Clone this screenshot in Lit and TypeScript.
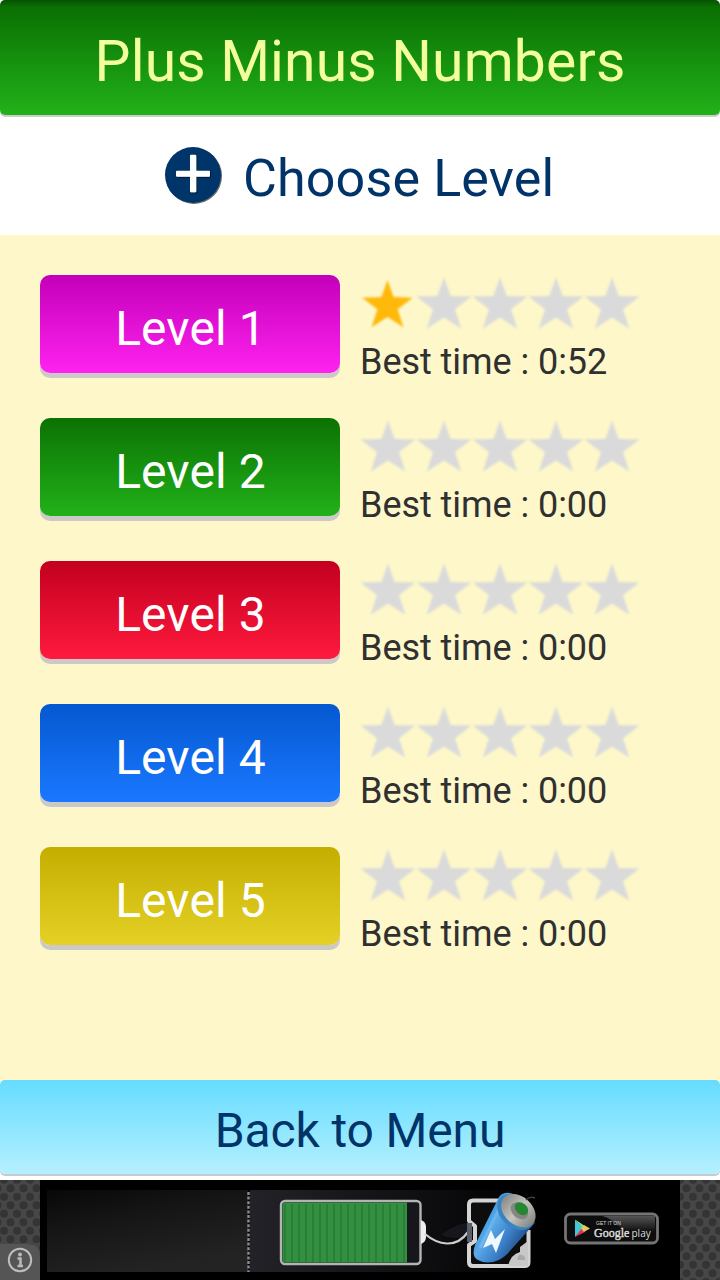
import { LitElement, html, svg, css } from "lit";
import { customElement, property } from "lit/decorators.js";

const STAR = "M28 1.5 L34.6 20 L55.3 20.6 L39 33.2 L45.2 52.6 L28 41.6 L10.8 52.6 L17 33.2 L0.7 20.6 L21.4 20 Z";

@customElement("level-row")
class LevelRow extends LitElement {
  @property({ type: Number }) level = 1;
  @property({ type: Number }) stars = 0;
  @property() time = "0:00";
  @property() tone = "green";

  static styles = css`
    :host { display: flex; gap: 20px; height: 103px; }
    .button {
      box-sizing: border-box; width: 300px; height: 98px; padding: 3px 0 0 1px;
      border: 0; border-radius: 10px; box-shadow: 0 5px 0 #ccc9c8;
      font: 48px/102px Roboto, sans-serif; letter-spacing: 0.1px;
      color: #fff; text-align: center;
    }
    .magenta { background: linear-gradient(#c300b9, #ff22f0); }
    .green { background: linear-gradient(#0b7204, #22b119); }
    .red { background: linear-gradient(#c3001f, #ff1a3e); }
    .blue { background: linear-gradient(#0558d0, #1a78ff); }
    .yellow { background: linear-gradient(#c3ae00, #e5d026); }
    .info { display: flex; flex-direction: column; width: 320px; }
    .stars { display: flex; height: 58px; }
    .star { width: 56px; height: 58px; filter: blur(0.8px); }
    .time {
      font: 36px/42px Roboto, sans-serif; letter-spacing: -0.05px; color: #303030;
      padding-top: 8px; white-space: nowrap;
    }
  `;

  render() {
    return html`
      <button class="button ${this.tone}">Level ${this.level}</button>
      <div class="info">
        <div class="stars">
          ${[0, 1, 2, 3, 4].map((i) => {
            const lit = i < this.stars;
            return html`<svg class="star" viewBox="0 0 56 58">
              <path d=${STAR} fill=${lit ? "#ffb90a" : "#dadada"}
                transform=${lit ? "translate(1.6 3.6) scale(.925)" : "translate(0 1)"} />
            </svg>`;
          })}
        </div>
        <div class="time">Best time : ${this.time}</div>
      </div>
    `;
  }
}

@customElement("ad-banner")
class AdBanner extends LitElement {
  static styles = css`
    :host { display: block; height: 100px; background: #000; }
    .art { display: block; width: 720px; height: 100px; }
    .small { font: 5px "Liberation Sans", sans-serif; }
    .google { font: 12px "Liberation Serif", serif; }
    .play { font: 10px "Open Sans", sans-serif; }
  `;

  render() {
    const stripes = Array.from({ length: 18 }, (_, i) => 285 + i * 7);
    return html`
      <svg class="art" viewBox="0 0 720 100">
        <defs>
          <pattern id="mesh" width="13" height="17" patternUnits="userSpaceOnUse" patternTransform="translate(4 4)">
            <rect width="13" height="17" fill="#474747" />
            <g fill="#343434">
              <circle cx="6.5" cy="4.2" r="4" />
              <circle cx="0" cy="12.7" r="4" />
              <circle cx="13" cy="12.7" r="4" />
            </g>
          </pattern>
          <linearGradient id="shade" x1="0" y1="0" x2=".45" y2="1">
            <stop offset="0" stop-color="#080808" />
            <stop offset=".4" stop-color="#151515" />
            <stop offset="1" stop-color="#232323" />
          </linearGradient>
          <linearGradient id="fade">
            <stop offset="0" stop-color="#222228" />
            <stop offset=".5" stop-color="#121215" />
            <stop offset="1" stop-color="#000" />
          </linearGradient>
          <linearGradient id="cell" gradientUnits="userSpaceOnUse" x1="482" y1="40" x2="525" y2="66">
            <stop offset="0" stop-color="#3d9be2" />
            <stop offset=".25" stop-color="#5aa9e8" />
            <stop offset=".6" stop-color="#3b7fc9" />
            <stop offset="1" stop-color="#1d4578" />
          </linearGradient>
          <linearGradient id="steel">
            <stop offset="0" stop-color="#8a8a88" />
            <stop offset=".5" stop-color="#c4c4c0" />
            <stop offset="1" stop-color="#858583" />
          </linearGradient>
          <linearGradient id="badge" x2="0" y2="1">
            <stop offset="0" stop-color="#555" />
            <stop offset="1" stop-color="#0c0c0c" />
          </linearGradient>
          <filter id="soft" filterUnits="userSpaceOnUse" x="0" y="0" width="720" height="100"><feGaussianBlur stdDeviation=".7" /></filter>
        </defs>

        <rect width="720" height="100" fill="#000" />
        <rect x="47" y="10" width="201" height="82" fill="url(#shade)" />
        <rect x="250" y="10" width="290" height="82" fill="url(#fade)" />
        <g filter="url(#soft)">
          <path d="M248.500 12V92" stroke="#8c8c8c" stroke-width="2.400" stroke-dasharray="3 1.600" />

          <rect x="281" y="21" width="139.500" height="63" rx="4" fill="#17171d" stroke="#b4b4b4" stroke-width="2.400" />
          <path d="M282.500 25q0-2.500 2.500-2.500H407V82.500H285q-2.500 0-2.500-2.500Z" fill="#33903f" />
          ${stripes.map((x) => svg`<path d="M${x} 24V82" stroke="#287a36" stroke-width="1.500" />`)}
          <path d="M421 40q5 2 5 7v10q0 5-5 7Z" fill="#eee" />
          <path d="M441 55Q456 43 468 43L468 56Q454 61 441 55" fill="#17171b" />
          <path d="M425 54C438 65 456 69 468 52" fill="none" stroke="#ccc" stroke-width="2.200" />

          <path d="M500 20.500H473q-4 0-4 4V41l6 5V61l-6 4V82q0 4 4 4H524.500q4 0 4-4V50" fill="#090a0c" stroke="#d4d4d4" stroke-width="4" stroke-linejoin="round" />
          <path d="M467 43h5v19h-5Z" fill="#59616c" />
          <path d="M508 86Q511 74 520 72V67L528 61V86Z" fill="#c8c8c8" />
          <path d="M517 80q1-6 5-5t3 5Z" fill="#aaa" />
          <path d="M499 17L475 65Q471 77 478 80Q487 85 499 80Q506 76 509 72L535 43Q528 18 510 13Q503 12 499 17Z" fill="url(#cell)" />
          <path d="M500 27L480 68" stroke="#8dcaf3" stroke-width="3" opacity=".4" />
          <g transform="rotate(42 518 31)">
            <ellipse cx="517" cy="33" rx="21" ry="15.500" fill="#3784c0" />
            <ellipse cx="518" cy="30.500" rx="19.500" ry="14" fill="url(#steel)" />
            <ellipse cx="519" cy="30" rx="10" ry="7" fill="#858583" />
            <ellipse cx="519" cy="27" rx="7.500" ry="5.500" fill="#258632" />
          </g>
          <path d="M526 20q4-4 9-2" fill="none" stroke="#37433e" stroke-width="1.500" />
          <path d="M491 50L483 68L492 64L496 73L505 49L495 59Z" fill="#f0f8ff" />

          <rect x="565.500" y="34" width="92" height="29" rx="5" fill="#080808" stroke="#747474" stroke-width="2.800" />
          <path d="M602 36H655V52Q622 54 611 40Q607 37 602 36Z" fill="url(#badge)" />
          <path d="M575 39.500V57L583 48.500Z" fill="#43c8d4" />
          <path d="M575 39.500L585 46L583 49Z" fill="#7bdc9c" />
          <path d="M575 57L585 52L582 48Z" fill="#dc395b" />
          <path d="M584 45L590 48.500L584 52L581 48.500Z" fill="#edc464" />
        </g>
        <g fill="#ddd">
          <text class="small" x="596" y="44.500">GET IT ON</text>
          <text class="google" x="594" y="56.500" stroke="#ddd" stroke-width=".4">Google</text>
          <text class="play" x="631.500" y="56.500">play</text>
        </g>

        <rect width="40" height="100" fill="url(#mesh)" />
        <rect x="680" width="40" height="100" fill="url(#mesh)" />
        <path d="M0 64H27Q40 64 40 77V100H0Z" fill="#555" />
        <g filter="url(#soft)">
          <circle cx="20" cy="80" r="11.200" fill="none" stroke="#bdbdbd" stroke-width="2" />
          <circle cx="20" cy="74.500" r="1.900" fill="#bbb" />
          <path d="M17.500 78.500H20.500V86M17.500 86H23" fill="none" stroke="#bbb" stroke-width="2.500" />
        </g>
      </svg>
    `;
  }
}

@customElement("app-root")
class AppRoot extends LitElement {
  static styles = css`
    :host {
      display: flex; flex-direction: column; width: 720px; height: 1280px;
      overflow: hidden; background: #fff; font-family: Roboto, sans-serif;
    }
    .title {
      height: 115px; box-sizing: border-box; padding-top: 8px;
      border-radius: 5px; box-shadow: 0 2px 0 #ccc;
      background: linear-gradient(#085103, #0a7003 7px, #22b119);
      color: #f3ff9c; text-align: center;
      font-size: 57px; line-height: 108px; letter-spacing: 0.17px;
    }
    .subtitle {
      display: flex; height: 120px; box-sizing: border-box;
      padding: 5px 0 0 160px; gap: 15px; color: #003469;
      font-size: 52px; line-height: 117px; letter-spacing: 0.15px;
    }
    .plus { width: 68px; height: 68px; margin-top: 22px; }
    .levels {
      display: flex; flex-direction: column; gap: 40px; flex: 1;
      padding: 40px 40px 0; background: #fdf7ca;
    }
    .foot { height: 100px; background: linear-gradient(#fdf7ca 8px, #fff 8px); }
    .back {
      display: block; width: 720px; height: 94px; box-sizing: border-box;
      padding: 5px 0 0; border: 0; border-radius: 5px; box-shadow: 0 2px 0 #c5ccd0;
      background: linear-gradient(#66dcff, #b5f0ff);
      font: 48px/92px Roboto, sans-serif; letter-spacing: -0.15px; color: #003469;
    }
  `;

  render() {
    const levels = [
      { tone: "magenta", stars: 1, time: "0:52" },
      { tone: "green", stars: 0, time: "0:00" },
      { tone: "red", stars: 0, time: "0:00" },
      { tone: "blue", stars: 0, time: "0:00" },
      { tone: "yellow", stars: 0, time: "0:00" },
    ];
    return html`
      <header class="title">Plus Minus Numbers</header>
      <div class="subtitle">
        <svg class="plus" viewBox="0 0 68 68">
          <defs><filter id="ds" x="-20%" y="-20%" width="140%" height="140%">
            <feDropShadow dx="1" dy="1" stdDeviation=".7" flood-color="#000" flood-opacity=".6" />
          </filter></defs>
          <circle cx="33" cy="33" r="28" fill="#003469" filter="url(#ds)" />
          <g fill="#fff" filter="url(#ds)">
            <rect x="30" y="12.800" width="6.200" height="37.400" rx="1" />
            <rect x="16" y="28.800" width="34" height="5.900" rx="1" />
          </g>
        </svg>
        <span>Choose Level</span>
      </div>
      <main class="levels">
        ${levels.map((l, i) => html`<level-row .level=${i + 1} .tone=${l.tone} .stars=${l.stars} .time=${l.time}></level-row>`)}
      </main>
      <footer class="foot"><button class="back">Back to Menu</button></footer>
      <ad-banner></ad-banner>
    `;
  }
}
